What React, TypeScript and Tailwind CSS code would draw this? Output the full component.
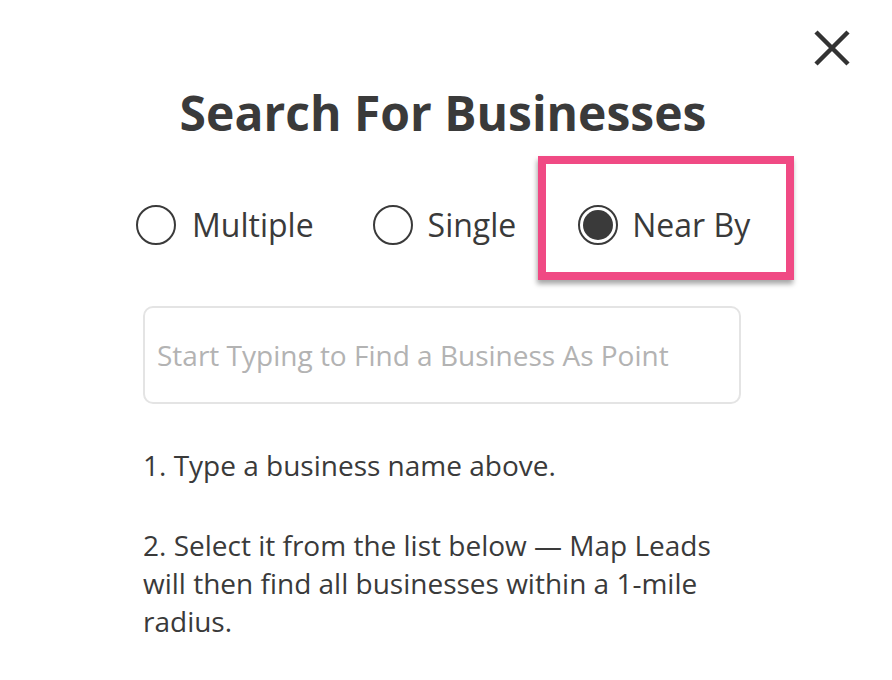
import { useState } from "react"

type Mode = "multiple" | "single" | "nearby"

function Radio({ checked }: { checked: boolean }) {
  return (
    <span className="flex h-[40px] w-[40px] shrink-0 items-center justify-center rounded-full border-2 border-[#3a3a3a] bg-white">
      {checked && <span className="h-[30px] w-[30px] rounded-full bg-[#3a3a3a]"></span>}
    </span>
  )
}

export default function App() {
  const [mode, setMode] = useState<Mode>("nearby")
  const [query, setQuery] = useState<string>("")

  return (
    <div className="relative h-[680px] w-full overflow-hidden bg-white font-['Open_Sans',sans-serif] text-[#3a3a3a]">
      {/* close button */}
      <button className="absolute left-[813px] top-[29px] h-[38px] w-[38px]" aria-label="Close">
        <svg viewBox="0 0 38 38" className="h-full w-full">
          <path d="M3 3 L35 35 M35 3 L3 35" stroke="#333" strokeWidth="4.5" strokeLinecap="butt" fill="none" />
        </svg>
      </button>

      <h1 className="mt-[84px] pr-[6px] text-center text-[48px] font-bold leading-[58px]">
        Search For Businesses
      </h1>

      <div className="ml-[136px] mt-[14px] flex h-[124px] items-center">
        <label className="flex cursor-pointer items-center gap-[16px] pt-[14px]" onClick={() => setMode("multiple")}>
          <Radio checked={mode === "multiple"} />
          <span className="text-[32px] leading-[40px]">Multiple</span>
        </label>
        <label className="ml-[59px] flex cursor-pointer items-center gap-[15px] pt-[14px]" onClick={() => setMode("single")}>
          <Radio checked={mode === "single"} />
          <span className="text-[32px] leading-[40px]">Single</span>
        </label>
        <div className="ml-[22px] flex h-[124px] w-[256px] items-center border-[8px] border-[#f04a84] bg-white pl-[32px] pt-[14px] shadow-[-1px_4px_5px_rgba(0,0,0,0.35)]">
          <label className="flex cursor-pointer items-center gap-[14px]" onClick={() => setMode("nearby")}>
            <Radio checked={mode === "nearby"} />
            <span className="text-[32px] leading-[40px]">Near By</span>
          </label>
        </div>
      </div>

      <div className="ml-[143px] w-[598px]">
        <input
          value={query}
          onChange={(e) => setQuery(e.target.value)}
          placeholder="Start Typing to Find a Business As Point"
          className="mt-[26px] h-[98px] w-full rounded-[10px] border-2 border-[#e4e4e4] px-[12px] text-[28px] text-[#3a3a3a] placeholder-[#b3b3b3] outline-none"
        />

        <p className="mt-[42px] text-[28px] leading-[38px]">1. Type a business name above.</p>
        <p className="mt-[42px] text-[28px] leading-[38px]">
          2. Select it from the list below — Map Leads will then find all businesses within a 1-mile radius.
        </p>
      </div>
    </div>
  )
}
